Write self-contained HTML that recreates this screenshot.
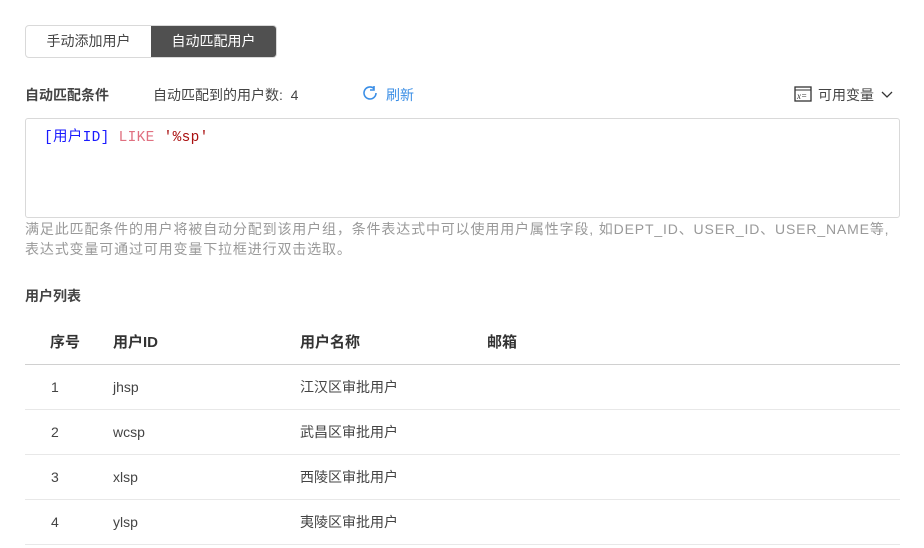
<!DOCTYPE html>
<html><head><meta charset="utf-8"><style>
*{margin:0;padding:0;box-sizing:border-box}
body{width:924px;height:548px;background:#fff;font-family:"Liberation Sans","Noto Sans CJK SC",sans-serif;color:#444;position:relative;overflow:hidden;font-size:14px}
.abs{position:absolute;white-space:nowrap}
.tabs{position:absolute;left:25px;top:25px;height:33px;display:flex;border:1px solid #d9d9d9;border-radius:4px;overflow:hidden}
.tabs div{width:125px;line-height:31px;text-align:center;font-size:14px}
.tabs .on{background:#505050;color:#fff}
.box{position:absolute;left:25px;top:118px;width:875px;height:100px;border:1px solid #d9d9d9;border-radius:3px}
.code{position:absolute;left:44px;top:125px;font-family:"Liberation Mono","Noto Sans CJK SC",monospace;font-size:14.5px;white-space:nowrap;letter-spacing:0.3px}
.hint{position:absolute;left:25px;top:219px;width:900px;font-size:14px;color:#999;line-height:20px;letter-spacing:0.85px;white-space:nowrap}
table{position:absolute;left:25px;top:319px;width:875px;border-collapse:collapse}
td,th{height:45px;border-bottom:1px solid #e8e8e8;text-align:left;font-size:14px;color:#444;font-weight:normal}
th{font-weight:bold;font-size:15px;border-bottom:1px solid #d0d0d0;color:#333}
</style></head><body>
<div class="tabs"><div>手动添加用户</div><div class="on">自动匹配用户</div></div>
<div class="abs" style="left:25px;top:85px;font-weight:bold">自动匹配条件</div>
<div class="abs" style="left:153px;top:85px">自动匹配到的用户数: &nbsp;4</div>
<svg class="abs" style="left:361px;top:84px" width="18" height="18" viewBox="0 0 18 18"><path d="M15 9a6 6 0 1 1-2-4.5" fill="none" stroke="#3a8ee6" stroke-width="1.6"/><path d="M13 2v4h-4" fill="none" stroke="#3a8ee6" stroke-width="1.6"/></svg>
<div class="abs" style="left:386px;top:85px;color:#3a8ee6">刷新</div>
<svg class="abs" style="left:794px;top:86px" width="18" height="16" viewBox="0 0 18 16"><rect x="1" y="1" width="16" height="14" fill="none" stroke="#333" stroke-width="1.3"/><line x1="1" y1="4" x2="17" y2="4" stroke="#333"/><text x="3" y="13" font-size="9" font-style="italic" fill="#333" font-family="Liberation Serif">x=</text></svg>
<div class="abs" style="left:818px;top:85px">可用变量</div>
<svg class="abs" style="left:881px;top:89px" width="12" height="10"><path d="M1 3l5 5 5-5" fill="none" stroke="#333" stroke-width="1.3"/></svg>
<div class="box"></div>
<div class="code"><span style="color:#1a1aff">[用户ID]</span> <span style="color:#e07080">LIKE</span> <span style="color:#a11">'%sp'</span></div>
<div class="hint">满足此匹配条件的用户将被自动分配到该用户组，条件表达式中可以使用用户属性字段, 如DEPT_ID、USER_ID、USER_NAME等,<br>表达式变量可通过可用变量下拉框进行双击选取。</div>
<div class="abs" style="left:25px;top:286px;font-weight:bold;font-size:14px">用户列表</div>
<table>
<tr><th style="width:88px;padding-left:25px">序号</th><th style="width:187px">用户ID</th><th style="width:187px">用户名称</th><th>邮箱</th></tr>
<tr><td style="padding-left:26px">1</td><td>jhsp</td><td>江汉区审批用户</td><td></td></tr>
<tr><td style="padding-left:26px">2</td><td>wcsp</td><td>武昌区审批用户</td><td></td></tr>
<tr><td style="padding-left:26px">3</td><td>xlsp</td><td>西陵区审批用户</td><td></td></tr>
<tr><td style="padding-left:26px">4</td><td>ylsp</td><td>夷陵区审批用户</td><td></td></tr>
</table>
</body></html>
